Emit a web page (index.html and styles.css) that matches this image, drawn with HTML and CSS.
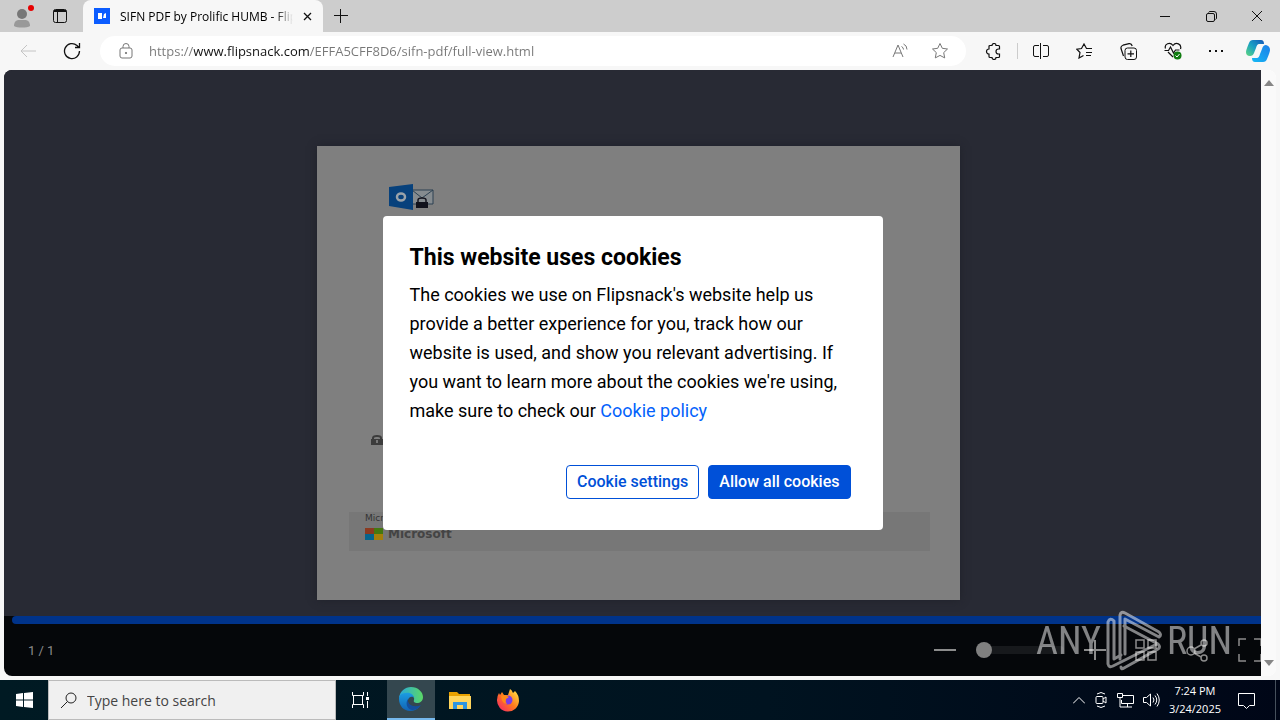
FILE: index.html
```
<!DOCTYPE html>
<html lang="en">
<head>
    <meta charset="UTF-8">
    <meta name="viewport" content="width=device-width, initial-scale=1.0">
    <title>SIFN PDF by Prolific HUMB - Flipsnack</title>
    <link rel="stylesheet" href="styles.css">
</head>
<body>

    <header class="tabBar">
        <button class="iconBtn profile" aria-label="Profile">
            <svg width="24" height="24" viewBox="0 0 24 24"><circle cx="12" cy="10" r="5" fill="#777"/><path d="M4 22c0-4 2-6 5-6h6c3 0 5 2 5 6-3 2-13 2-16 0z" fill="#999"/><circle cx="21" cy="4" r="3" fill="#e60000"/></svg>
        </button>
        <button class="iconBtn" aria-label="Tab actions">
            <svg width="16" height="16" viewBox="0 0 16 16"><rect x="1.5" y="1.5" width="13" height="13" rx="2"/><path d="M1.5 3.5h13M2 2.5h12M5.500 4v10"/></svg>
        </button>
        <div class="tab">
            <svg width="16" height="16" viewBox="0 0 16 16"><rect width="16" height="16" fill="#0b5cff"/><path d="M4 5h4v6H4zM9 10l1-4 2-1v5z" fill="#fff"/></svg>
            <span class="tabTitle">SIFN PDF by Prolific HUMB - Flipsnack</span>
            <button class="iconBtn close" aria-label="Close tab">
                <svg width="9" height="9" viewBox="0 0 9 9"><path d="M1 1l7 7M8 1l-7 7" stroke-width="1.300"/></svg>
            </button>
        </div>
        <button class="iconBtn newTab" aria-label="New tab">
            <svg width="14" height="14" viewBox="0 0 14 14"><path d="M6.500 0v14M0 6.500h14"/></svg>
        </button>
        <div class="winButtons">
            <button class="iconBtn" aria-label="Minimize"><svg width="10" height="10" viewBox="0 0 10 10"><path d="M0 5.500h10"/></svg></button>
            <button class="iconBtn" aria-label="Restore"><svg width="11" height="11" viewBox="0 0 11 11"><rect x=".5" y="2.500" width="8" height="8" rx="1.500"/><path d="M2.500 1.500Q3 .5 4 .5h4q2.500 0 2.500 2.500v4q0 1-1 1.500"/></svg></button>
            <button class="iconBtn" aria-label="Close"><svg width="10" height="10" viewBox="0 0 10 10"><path d="M0 0l10 10M10 0L0 10"/></svg></button>
        </div>
    </header>

    <nav class="toolBar">
        <button class="iconBtn back" aria-label="Back"><svg width="16" height="14" viewBox="0 0 16 14"><path d="M16 7H1M7 1L1 7l6 6"/></svg></button>
        <button class="iconBtn" aria-label="Refresh"><svg width="18" height="18" viewBox="0 0 18 18"><path d="M16.500 9A7.500 7.500 0 1 1 14 3.500L16 5.500M16.500 1v4.500H12" stroke-width="1.300"/></svg></button>
        <div class="address">
            <svg width="14" height="16" viewBox="0 0 14 16"><rect x="1" y="5" width="12" height="10" rx="2"/><path d="M4 5V3.500a3 3 0 0 1 6 0V5"/><circle cx="7" cy="10" r=".7" fill="#666"/></svg>
            <input class="url" type="text" aria-label="Address" value="https://www.flipsnack.com/EFFA5CFF8D6/sifn-pdf/full-view.html">
            <button class="iconBtn" aria-label="Read aloud"><svg width="17" height="16" viewBox="0 0 17 16"><path d="M1 14L6 2l5 12M3 10h6M9.500 3.500q2 1 2 3M11.500 1q3.500 1.500 3.500 5.500"/></svg></button>
            <button class="iconBtn" aria-label="Add to favorites"><svg width="18" height="18" viewBox="0 0 18 18"><path d="M9 1.500l2.300 4.800 5.200.7-3.800 3.600 1 5.300L9 13.400l-4.700 2.500 1-5.300L1.500 7l5.200-.7z"/></svg></button>
        </div>
        <div class="tools">
            <button class="iconBtn" aria-label="Extensions"><svg width="17" height="17" viewBox="0 0 17 17"><path d="M5 2.500h2a2 2 0 0 1 4 0h2.500q1 0 1 1V6h-1a2.500 2.500 0 0 0 0 5h1v2.500q0 1-1 1H11a2 2 0 0 1-4 0H5q-1 0-1-1V11a2.500 2.500 0 0 1 0-5V3.500q0-1 1-1z" stroke-width="1.200"/></svg></button>
            <span class="divider"></span>
            <button class="iconBtn" aria-label="Split screen"><svg width="16" height="16" viewBox="0 0 16 16"><path d="M6 2.500H2q-1.500 0-1.500 1.500v8q0 1.500 1.500 1.500h4M10 2.500h4q1.500 0 1.500 1.500v8q0 1.500-1.500 1.500h-4M7.500 0v16"/></svg></button>
            <button class="iconBtn" aria-label="Favorites"><svg width="17" height="16" viewBox="0 0 17 16"><path d="M16 5.500h-5.500L8 1 5.500 5.500.8 6.200 4 9.500l-1 5.500 4.500-2.500M10 9.500h6M10 12.500h5" stroke-width="1.200"/></svg></button>
            <button class="iconBtn" aria-label="Collections"><svg width="17" height="17" viewBox="0 0 17 17"><rect x="5" y="5" width="11.500" height="11.500" rx="2.500"/><path d="M10.800 7.500v6.500M7.500 10.800h6.500M3.500 13L1 5.500Q.5 3 3 2.200l6-1.500q2.500-.5 3.200 2.300" stroke-width="1.200"/></svg></button>
            <button class="iconBtn" aria-label="Browser essentials"><svg width="18" height="18" viewBox="0 0 18 18"><path d="M9 15L4 10M1.500 6.500C0 2 6-.5 9 3.500c3-4 9-1.500 7.500 3.500M.5 8.500h4l2-3.500 3 6 2-3h4" stroke-width="1.200"/><circle cx="13.500" cy="13.500" r="4" fill="#107c10" stroke="none"/><path d="M11.500 13.500l1.500 1.500 2.500-3" stroke="#fff"/></svg></button>
            <button class="iconBtn" aria-label="Settings and more"><svg width="14" height="4" viewBox="0 0 14 4"><path d="M0 1h2v2H0zM6 1h2v2H6zM12 1h2v2h-2z" fill="#111" stroke="none"/></svg></button>
            <button class="iconBtn copilot" aria-label="Copilot">
                <svg width="24" height="24" viewBox="0 0 24 24">
                    <defs>
                        <linearGradient id="cpA" x1="1" y1="0" x2="0" y2="1"><stop offset="0" stop-color="#1456b8"/><stop offset=".5" stop-color="#189fc4"/><stop offset="1" stop-color="#5dd67f"/></linearGradient>
                        <linearGradient id="cpB" x1="1" y1="0" x2="0" y2="1"><stop offset="0" stop-color="#1c7ee8"/><stop offset="1" stop-color="#16b9f4"/></linearGradient>
                    </defs>
                    <path d="M7 1h8q3 0 3 4l-5 0q-2 0-3 4l-2 5q-1 3-4 3-4 0-4-4 0-2 3-9 1-3 4-3z" fill="url(#cpA)"/>
                    <path d="M17 23H9q-3 0-3-4h5q2 0 3-4l2-5q1-4 4-4 4 1 4 5 0 2-3 9-1 3-4 3z" fill="url(#cpB)"/>
                </svg>
            </button>
        </div>
    </nav>

    <div class="browserPage">
        <main class="viewer">
            <section class="stage">
                <article class="sheet">
                    <svg class="outlook" width="46" height="26" viewBox="0 0 46 26">
                        <path d="M24 6h21v14H24z" fill="#858b8f" stroke="#2c4152"/><path d="M24 6l10 8 11-8" fill="none" stroke="#2c4152"/>
                        <path d="M1 3L25 0v26L1 22z" fill="#07417c"/>
                        <ellipse cx="13" cy="13" rx="4" ry="3.500" fill="none" stroke="#9aa3aa" stroke-width="2.500"/>
                        <path d="M30 18v-2q0-2 4-2t4 2v2" fill="none" stroke="#15151f" stroke-width="1.500"/><rect x="28" y="18" width="12" height="6" fill="#11121c"/>
                    </svg>
                    <svg class="lock" width="14" height="11" viewBox="0 0 14 11"><path d="M3 4V3q0-2 4-2t4 2v1" fill="none" stroke="#3c3c3c" stroke-width="2"/><rect x="1" y="4" width="12" height="6" fill="#3c3c3c"/><path d="M6 5h2v3H6z" fill="#777"/></svg>
                    <footer class="sheetFooter">
                        <span class="small">Microsoft</span>
                        <div class="brand">
                            <svg width="18" height="12" viewBox="0 0 18 12"><path d="M0 0h9v6H0z" fill="#8b3a20"/><path d="M9 0h9v6H9z" fill="#45780f"/><path d="M0 6h9v6H0z" fill="#06648c"/><path d="M9 6h9v6H9z" fill="#a4800b"/></svg>
                            <span>Microsoft</span>
                        </div>
                    </footer>
                </article>
            </section>

            <div class="progress"></div>

            <section class="controls">
                <span class="pageNo">1 / 1</span>
                <button class="iconBtn" aria-label="Zoom out"><svg width="22" height="24" viewBox="0 0 22 24"><path d="M0 12h22" stroke-width="2"/></svg></button>
                <input class="zoomRange" type="range" min="0" max="100" value="0" aria-label="Zoom">
                <button class="iconBtn" aria-label="Zoom in"><svg width="22" height="24" viewBox="0 0 22 24"><path d="M0 12h22M11 2v20" stroke-width="2"/></svg></button>
                <button class="iconBtn" aria-label="Pages"><svg width="24" height="24" viewBox="0 0 24 24"><path d="M2 2h8v8H2zM14 2h8v8h-8zM2 14h8v8H2zM14 14h8v8h-8z" stroke-width="1.500"/></svg></button>
                <button class="iconBtn" aria-label="Share"><svg width="24" height="24" viewBox="0 0 24 24"><g stroke-width="1.500"><circle cx="5" cy="13" r="4"/><circle cx="18" cy="5" r="3"/><circle cx="18" cy="20" r="3"/><path d="M8 11l7-4M8 15l7 4"/></g></svg></button>
                <button class="iconBtn" aria-label="Full screen"><svg width="24" height="24" viewBox="0 0 24 24"><path d="M1 8V1h7M16 1h7v7M1 16v7h7M16 23h7v-7" stroke-width="1.500"/></svg></button>
            </section>

            <div class="modal" role="dialog" aria-labelledby="cookieTitle">
                <h1 id="cookieTitle">This website uses cookies</h1>
                <p>The cookies we use on Flipsnack's website help us provide a better experience for you, track how our website is used, and show you relevant advertising. If you want to learn more about the cookies we're using, make sure to check our <a href="#">Cookie policy</a></p>
                <div class="modalButtons">
                    <button class="btn">Cookie settings</button>
                    <button class="btn btnPrimary">Allow all cookies</button>
                </div>
            </div>
        </main>

        <div class="scrollBar">
            <svg width="10" height="6" viewBox="0 0 10 6"><path d="M0 6l5-6 5 6z"/></svg>
            <svg width="10" height="6" viewBox="0 0 10 6"><path d="M0 0l5 6 5-6z"/></svg>
        </div>
    </div>

    <footer class="taskBar">
        <button class="task" aria-label="Start"><svg width="17" height="16" viewBox="0 0 17 16"><path d="M0 2l7-1v6.500H0zM8 1l9-1v7.500H8zM0 8.500h7V15l-7-1zM8 8.500h9V16l-9-1z" fill="#fff"/></svg></button>
        <label class="search">
            <svg width="17" height="17" viewBox="0 0 17 17"><circle cx="11" cy="6" r="5" /><path d="M7.500 9.500L1 16"/></svg>
            <input type="text" placeholder="Type here to search" aria-label="Search">
        </label>
        <button class="task" aria-label="Task view"><svg width="17" height="16" viewBox="0 0 17 16"><path d="M.5 0v3.500h11V0M.5 16v-3.500h11V16M1.500 4v8M10.500 4v8M15.500 0v4M15.500 9v7" fill="none" stroke="#fff"/><path d="M14 5h3v3h-3z" fill="#fff"/></svg></button>
        <button class="task active" aria-label="Edge">
            <svg width="24" height="24" viewBox="0 0 24 24">
                <defs>
                    <linearGradient id="edA" x1="0" y1="0" x2="1" y2="0"><stop offset="0" stop-color="#28a8dd"/><stop offset="1" stop-color="#5bd866"/></linearGradient>
                    <linearGradient id="edB" x1="0" y1="0" x2="0" y2="1"><stop offset="0" stop-color="#1b9de2"/><stop offset="1" stop-color="#1262b3"/></linearGradient>
                </defs>
                <path d="M0 11C1 4 6 0 12 0c7 0 12 5 12 10 0 4-3 6-6 6-2 0-4-1-3-3 1-4-3-6-7-5-4 0-7 1-8 3z" fill="url(#edA)"/>
                <path d="M0 12c0-4 3-6 7-6 4-1 8 2 8 5-1-2-5-2-6 2-1 5 5 9 12 6-2 3-6 5-10 5C5 24 0 19 0 12z" fill="url(#edB)"/>
                <path d="M9 12c-3 4-1 10 4 11 4 0 7-2 9-5-7 3-14 0-13-6z" fill="#144e9c"/>
            </svg>
        </button>
        <button class="task" aria-label="File Explorer"><svg width="22" height="19" viewBox="0 0 22 19"><path d="M0 1h8l2 2h11v5H0z" fill="#e8a100"/><path d="M0 5h22v13H0z" fill="#ffd55c"/><path d="M4 18v-7h14v7h-4v-4H8v4z" fill="#2d95df"/></svg></button>
        <button class="task" aria-label="Firefox">
            <svg width="24" height="24" viewBox="0 0 24 24">
                <defs><linearGradient id="ffA" x1="1" y1="0" x2="0" y2="1"><stop offset="0" stop-color="#fff04a"/><stop offset=".5" stop-color="#ff7a1c"/><stop offset="1" stop-color="#f31a70"/></linearGradient></defs>
                <path d="M3 5l1 2 2-3 2 3 4 0 2-6q2 1 3 4l2-2q4 4 4 10A11 11 0 1 1 1 12q0-4 2-7z" fill="url(#ffA)"/>
                <circle cx="12" cy="12" r="4.500" fill="#7a3be6"/><path d="M5 8q4-2 8 1l-3 2q-1 3 1 5-5 0-6-8z" fill="#ff8a16"/>
            </svg>
        </button>
        <div class="tray">
            <svg width="12" height="7" viewBox="0 0 12 7"><path d="M0 6.500l6-6 6 6"/></svg>
            <svg width="14" height="18" viewBox="0 0 14 18"><rect x="2" y="5.500" width="7" height="7" rx="1"/><path d="M9 8l3-2v6l-3-2M3 3q4-3 8 0M3 15q4 3 8 0"/></svg>
            <svg width="17" height="15" viewBox="0 0 17 15"><path d="M6 2.500h10.500v8H4.500V7M10.500 11v3M6 14h9M.5.5h5v4h-5zM3 5v9h3"/></svg>
            <svg width="17" height="16" viewBox="0 0 17 16"><path d="M.5 5.500h3l4-3.500v12l-4-3.500h-3zM10 5.500q2 2.500 0 5M12 3.500q3.500 4.500 0 9M14 1.500q4.500 6.500 0 13"/></svg>
            <div class="clock"><span>7:24 PM</span><span>3/24/2025</span></div>
            <svg width="17" height="17" viewBox="0 0 17 17"><path d="M.5 1.500h16v12h-5l-3 3-3-3h-5z"/></svg>
        </div>
    </footer>

    <div class="watermark">
        <span>ANY</span>
        <svg width="58" height="64" viewBox="0 0 58 64" fill="none" stroke="#fff" stroke-width="3" stroke-linecap="round" stroke-linejoin="round">
            <path d="M9 14v-2q-4-4-6 1v42q1 4 5 2l44-22M9 12v38l7-4"/>
            <path d="M15 50V6q1-4 5-2l34 19q3 3 0 5L20 10v35"/>
            <path d="M19 17l34 18q3 3 0 5L19 59q-3 2-3-1"/>
        </svg>
        <span>RUN</span>
    </div>

</body>
</html>
```
FILE: styles.css
```
*{
    box-sizing: border-box;
}

body{
    margin: 0;
    height: 100vh;
    display: flex;
    flex-direction: column;
    overflow: hidden;
    background-color: #f7f7f7;
    font-family: "Open Sans", "Noto Sans", sans-serif;
}

.iconBtn{
    display: flex;
    align-items: center;
    justify-content: center;
    padding: 0;
    border: none;
    background: none;
    flex-shrink: 0;
}

.iconBtn svg{
    fill: none;
    stroke: #111;
}

/* tabs */

.tabBar{
    display: flex;
    align-items: center;
    height: 32px;
    flex-shrink: 0;
    padding-left: 10px;
    background-color: #cdcdcd;
}

.profile svg,
.tab > svg,
.copilot svg{
    stroke: none;
}

.profile{
    margin-right: 18px;
}

.tab{
    display: flex;
    align-items: center;
    width: 240px;
    height: 32px;
    margin-left: 15px;
    padding: 0 11px;
    gap: 10px;
    border-radius: 8px 8px 0 0;
    background-color: #f7f7f7;
}

.tabTitle{
    flex: 1;
    overflow: hidden;
    white-space: nowrap;
    font-size: 12px;
    mask-image: linear-gradient(to right, #000 90%, transparent);
}

.newTab{
    margin-left: 11px;
}

.winButtons{
    display: flex;
    margin-left: auto;
}

.winButtons .iconBtn{
    width: 46px;
    height: 32px;
}

/* toolbar */

.toolBar{
    display: flex;
    align-items: center;
    height: 38px;
    flex-shrink: 0;
    padding: 0 10px 0 20px;
}

.back{
    margin-right: 27px;
}

.back svg{
    stroke: #c4c4c4;
}

.address{
    display: flex;
    align-items: center;
    flex: 1;
    height: 30px;
    margin-left: 19px;
    padding: 0 17px 0 19px;
    border-radius: 15px;
    background-color: #fff;
}

.address svg{
    fill: none;
    stroke: #777;
}

.address .iconBtn + .iconBtn{
    margin-left: 22px;
}

.url{
    flex: 1;
    margin-left: 16px;
    padding: 0;
    border: none;
    outline: none;
    font-family: inherit;
    font-size: 13px;
    background: linear-gradient(to right, #777 45px, #111 45px, #111 161px, #777 161px);
    background-clip: text;
    -webkit-background-clip: text;
    color: transparent;
}

.tools{
    display: flex;
    align-items: center;
    gap: 27px;
    margin-left: 19px;
}

.divider{
    width: 1px;
    height: 16px;
    margin: 0 -12px;
    background-color: #ccc;
}

.copilot{
    margin-left: -4px;
}

/* page */

.browserPage{
    display: flex;
    flex: 1;
    min-height: 0;
    margin: 0 4px 4px;
    overflow: hidden;
    border-radius: 8px;
    background-color: #fff;
}

.viewer{
    position: relative;
    display: flex;
    flex-direction: column;
    flex: 1;
    min-width: 0;
    overflow: hidden;
    background-color: #05070a;
}

.stage{
    display: flex;
    align-items: center;
    justify-content: center;
    flex: 1;
    min-height: 0;
    padding: 60px 0 0 12px;
    background-color: #282a34;
}

.sheet{
    display: flex;
    flex-direction: column;
    width: 643px;
    max-width: 90%;
    height: 454px;
    padding: 38px 30px 49px 32px;
    background-color: #7f7f7f;
    box-shadow: 0 0 8px #20222a;
}

.outlook{
    margin-left: 39px;
}

.lock{
    margin: 225px 0 0 21px;
}

.sheetFooter{
    margin-top: auto;
    height: 39px;
    padding-left: 16px;
    background-color: #777;
    color: #333;
    font-family: "DejaVu Sans", sans-serif;
}

.small{
    display: block;
    font-size: 9px;
    line-height: 12px;
}

.brand{
    display: flex;
    align-items: center;
    gap: 5px;
    margin-top: 4px;
    color: #444;
    font-size: 12px;
    font-weight: bold;
    line-height: 12px;
}

.progress{
    height: 8px;
    margin-left: 8px;
    border-radius: 4px 0 0 4px;
    background-color: #00338a;
}

.controls{
    display: flex;
    align-items: center;
    height: 52px;
    gap: 28px;
    margin-right: -1px;
    padding-left: 24px;
}

.controls .iconBtn svg{
    stroke: #8c8c8c;
}

.pageNo{
    margin-right: auto;
    color: #8c8c8c;
    font-family: Roboto, sans-serif;
    font-size: 13px;
}

.zoomRange{
    appearance: none;
    width: 88px;
    height: 8px;
    margin: 0 -8px;
    border-radius: 4px;
    background-color: #17191c;
}

.zoomRange::-webkit-slider-thumb{
    appearance: none;
    width: 16px;
    height: 16px;
    border-radius: 50%;
    background-color: #808080;
}

.scrollBar{
    display: flex;
    flex-direction: column;
    align-items: center;
    justify-content: space-between;
    width: 15px;
    padding: 10px 0;
    background-color: #fafafa;
}

.scrollBar svg{
    fill: #868686;
}

/* cookies */

.modal{
    position: absolute;
    top: 50%;
    left: 50%;
    transform: translate(-50%, -50%);
    width: 500px;
    padding: 28px 32px 31px 27px;
    border-radius: 4px;
    background-color: #fff;
    color: #000;
    font-family: Roboto, sans-serif;
}

.modal h1{
    margin: 0 0 8px;
    font-size: 23px;
    font-weight: bold;
    line-height: 28px;
}

.modal p{
    margin: 0;
    font-size: 18px;
    line-height: 29px;
}

.modal a{
    color: #0362fc;
    text-decoration: none;
}

.modalButtons{
    display: flex;
    justify-content: flex-end;
    gap: 9px;
    margin-top: 40px;
}

.btn{
    height: 34px;
    padding: 0 10px 2px;
    border: 1px solid #0050d8;
    border-radius: 4px;
    background-color: #fff;
    color: #0050d8;
    font-family: inherit;
    font-size: 16px;
    font-weight: 500;
}

.btnPrimary{
    background-color: #0050d8;
    color: #fff;
}

/* taskbar */

.taskBar{
    display: flex;
    align-items: center;
    height: 40px;
    flex-shrink: 0;
    background: linear-gradient(to right, #001a23, #001320 60%, #000617);
}

.task{
    display: flex;
    align-items: center;
    justify-content: center;
    width: 48px;
    height: 40px;
    padding: 0;
    border: none;
    background: none;
}

.active{
    margin: 0 1px 0 3px;
    background-color: #34474f;
    border-bottom: 2px solid #76b9ed;
}

.search{
    display: flex;
    align-items: center;
    width: 288px;
    height: 40px;
    padding-left: 11px;
    gap: 10px;
    border: 1px solid #bbb;
    background-color: #f0f0f0;
}

.search svg{
    fill: none;
    stroke: #222;
}

.search input{
    flex: 1;
    min-width: 0;
    padding: 0;
    border: none;
    outline: none;
    background: none;
    font-family: inherit;
    font-size: 14px;
}

.search input::placeholder{
    color: #444;
}

.tray{
    display: flex;
    align-items: center;
    gap: 9px;
    height: 40px;
    margin-left: auto;
    margin-right: 4px;
    padding-right: 20px;
    border-right: 1px solid #46505c;
}

.tray svg{
    fill: none;
    stroke: #fff;
}

.clock{
    display: flex;
    flex-direction: column;
    align-items: center;
    margin-right: 8px;
    color: #fff;
    font-size: 11px;
    line-height: 18px;
}

/* watermark */

.watermark{
    position: absolute;
    right: 48px;
    bottom: 47px;
    display: flex;
    align-items: center;
    gap: 4px;
    color: #fff;
    font-family: "Roboto Condensed", Roboto, sans-serif;
    font-size: 38px;
    opacity: 0.5;
    pointer-events: none;
}
```
